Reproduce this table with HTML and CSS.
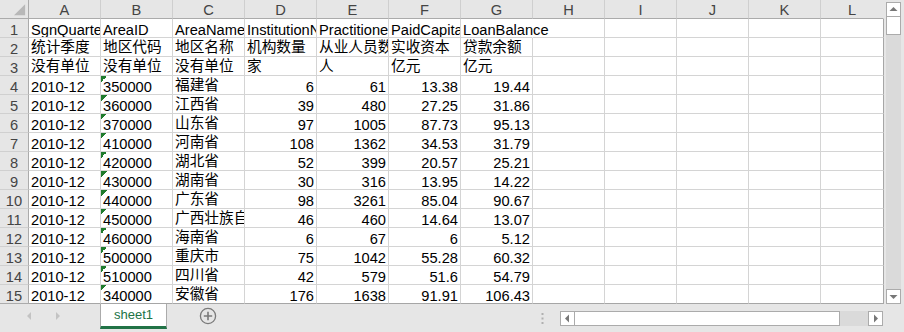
FILE: index.html
```html
<!DOCTYPE html>
<html lang="zh-CN">
<head>
<meta charset="utf-8">
<title>sheet1</title>
<link rel="stylesheet" href="styles.css">
</head>
<body>
<div class="app">
  <div class="top">
    <div class="sheet">
      <div class="corner"><svg width="29" height="18" viewBox="0 0 29 18"><polygon points="26,4 26,15.5 14.5,15.5" fill="#b8b8b8"/></svg></div>
      <div class="ch">A</div><div class="ch">B</div><div class="ch">C</div><div class="ch">D</div><div class="ch">E</div><div class="ch">F</div><div class="ch">G</div><div class="ch">H</div><div class="ch">I</div><div class="ch">J</div><div class="ch">K</div><div class="ch lc">L</div>

      <div class="rh">1</div><div class="c">SgnQuarter</div><div class="c">AreaID</div><div class="c">AreaName</div><div class="c">InstitutionNum</div><div class="c">Practitioners</div><div class="c">PaidCapital</div><div class="c spill">LoanBalance</div><div class="c"></div><div class="c"></div><div class="c"></div><div class="c"></div><div class="c lc"></div>

      <div class="rh">2</div><div class="c z">统计季度</div><div class="c z">地区代码</div><div class="c z">地区名称</div><div class="c z">机构数量</div><div class="c z">从业人员数</div><div class="c z">实收资本</div><div class="c z">贷款余额</div><div class="c"></div><div class="c"></div><div class="c"></div><div class="c"></div><div class="c lc"></div>

      <div class="rh">3</div><div class="c z">没有单位</div><div class="c z">没有单位</div><div class="c z">没有单位</div><div class="c z">家</div><div class="c z">人</div><div class="c z">亿元</div><div class="c z">亿元</div><div class="c"></div><div class="c"></div><div class="c"></div><div class="c"></div><div class="c lc"></div>

      <div class="rh">4</div><div class="c">2010-12</div><div class="c tri">350000</div><div class="c z">福建省</div><div class="c n">6</div><div class="c n">61</div><div class="c n">13.38</div><div class="c n">19.44</div><div class="c"></div><div class="c"></div><div class="c"></div><div class="c"></div><div class="c lc"></div>

      <div class="rh">5</div><div class="c">2010-12</div><div class="c tri">360000</div><div class="c z">江西省</div><div class="c n">39</div><div class="c n">480</div><div class="c n">27.25</div><div class="c n">31.86</div><div class="c"></div><div class="c"></div><div class="c"></div><div class="c"></div><div class="c lc"></div>

      <div class="rh">6</div><div class="c">2010-12</div><div class="c tri">370000</div><div class="c z">山东省</div><div class="c n">97</div><div class="c n">1005</div><div class="c n">87.73</div><div class="c n">95.13</div><div class="c"></div><div class="c"></div><div class="c"></div><div class="c"></div><div class="c lc"></div>

      <div class="rh">7</div><div class="c">2010-12</div><div class="c tri">410000</div><div class="c z">河南省</div><div class="c n">108</div><div class="c n">1362</div><div class="c n">34.53</div><div class="c n">31.79</div><div class="c"></div><div class="c"></div><div class="c"></div><div class="c"></div><div class="c lc"></div>

      <div class="rh">8</div><div class="c">2010-12</div><div class="c tri">420000</div><div class="c z">湖北省</div><div class="c n">52</div><div class="c n">399</div><div class="c n">20.57</div><div class="c n">25.21</div><div class="c"></div><div class="c"></div><div class="c"></div><div class="c"></div><div class="c lc"></div>

      <div class="rh">9</div><div class="c">2010-12</div><div class="c tri">430000</div><div class="c z">湖南省</div><div class="c n">30</div><div class="c n">316</div><div class="c n">13.95</div><div class="c n">14.22</div><div class="c"></div><div class="c"></div><div class="c"></div><div class="c"></div><div class="c lc"></div>

      <div class="rh">10</div><div class="c">2010-12</div><div class="c tri">440000</div><div class="c z">广东省</div><div class="c n">98</div><div class="c n">3261</div><div class="c n">85.04</div><div class="c n">90.67</div><div class="c"></div><div class="c"></div><div class="c"></div><div class="c"></div><div class="c lc"></div>

      <div class="rh">11</div><div class="c">2010-12</div><div class="c tri">450000</div><div class="c z">广西壮族自治区</div><div class="c n">46</div><div class="c n">460</div><div class="c n">14.64</div><div class="c n">13.07</div><div class="c"></div><div class="c"></div><div class="c"></div><div class="c"></div><div class="c lc"></div>

      <div class="rh">12</div><div class="c">2010-12</div><div class="c tri">460000</div><div class="c z">海南省</div><div class="c n">6</div><div class="c n">67</div><div class="c n">6</div><div class="c n">5.12</div><div class="c"></div><div class="c"></div><div class="c"></div><div class="c"></div><div class="c lc"></div>

      <div class="rh">13</div><div class="c">2010-12</div><div class="c tri">500000</div><div class="c z">重庆市</div><div class="c n">75</div><div class="c n">1042</div><div class="c n">55.28</div><div class="c n">60.32</div><div class="c"></div><div class="c"></div><div class="c"></div><div class="c"></div><div class="c lc"></div>

      <div class="rh">14</div><div class="c">2010-12</div><div class="c tri">510000</div><div class="c z">四川省</div><div class="c n">42</div><div class="c n">579</div><div class="c n">51.6</div><div class="c n">54.79</div><div class="c"></div><div class="c"></div><div class="c"></div><div class="c"></div><div class="c lc"></div>

      <div class="rh lr">15</div><div class="c lr">2010-12</div><div class="c tri lr">340000</div><div class="c z lr">安徽省</div><div class="c n lr">176</div><div class="c n lr">1638</div><div class="c n lr">91.91</div><div class="c n lr">106.43</div><div class="c lr"></div><div class="c lr"></div><div class="c lr"></div><div class="c lr"></div><div class="c lc lr"></div>
    </div>
    <div class="vscroll">
      <div class="sbtn"><svg width="13" height="13" viewBox="0 0 13 13"><polygon points="2.5,8 10.5,8 6.5,4" fill="#777"/></svg></div>
      <div class="vthumb"></div>
      <div class="vtrack"></div>
      <div class="sbtn"><svg width="13" height="13" viewBox="0 0 13 13"><polygon points="2.5,5 10.5,5 6.5,9" fill="#777"/></svg></div>
    </div>
  </div>
  <div class="tabbar">
    <div class="tabnav">
      <svg width="8" height="10" viewBox="0 0 8 10"><polygon points="6,1 6,9 2,5" fill="#c3c3c3"/></svg>
      <svg width="8" height="10" viewBox="0 0 8 10"><polygon points="2,1 2,9 6,5" fill="#c3c3c3"/></svg>
    </div>
    <div class="tab">sheet1</div>
    <div class="addsheet"><svg width="18" height="18" viewBox="0 0 18 18"><circle cx="9" cy="9" r="7.6" fill="none" stroke="#7a7a7a" stroke-width="1.3"/><path d="M9 4.8V13.2M4.8 9H13.2" stroke="#7a7a7a" stroke-width="1.6"/></svg></div>
    <div class="spacer"></div>
    <div class="grip"><svg width="3" height="11" viewBox="0 0 3 11"><rect x="0.5" y="0" width="2" height="2" fill="#b0b0b0"/><rect x="0.5" y="4.5" width="2" height="2" fill="#b0b0b0"/><rect x="0.5" y="9" width="2" height="2" fill="#b0b0b0"/></svg></div>
    <div class="hscroll">
      <div class="sbtn h"><svg width="13" height="13" viewBox="0 0 13 13"><polygon points="8,2.5 8,10.5 4,6.5" fill="#777"/></svg></div>
      <div class="hthumb"></div>
      <div class="htrack"></div>
      <div class="sbtn h"><svg width="13" height="13" viewBox="0 0 13 13"><polygon points="5,2.5 5,10.5 9,6.5" fill="#777"/></svg></div>
    </div>
  </div>
</div>
</body>
</html>
```
FILE: styles.css
```css
* { box-sizing: border-box; }

html, body {
  margin: 0;
  padding: 0;
}

body {
  width: 904px;
  height: 332px;
  overflow: hidden;
  background: #e6e6e6;
  font-family: "Liberation Sans", "Noto Sans CJK SC", sans-serif;
  font-size: 14.67px;
  color: #000;
}

.app {
  display: flex;
  flex-direction: column;
  width: 904px;
  height: 332px;
}

.top {
  display: flex;
  height: 304px;
}

.sheet {
  width: 884px;
  height: 304px;
  background: #fff;
  display: grid;
  grid-template-columns: 29px repeat(11, 72px) 63px;
  grid-template-rows: repeat(16, 19px);
  overflow: hidden;
}

.corner {
  background: #e6e6e6;
  border-right: 1px solid #ababab;
  border-bottom: 1px solid #ababab;
  display: flex;
}

.corner svg { display: block; }

.ch {
  background: #e6e6e6;
  border-right: 1px solid #cfcfcf;
  border-bottom: 1px solid #ababab;
  text-align: center;
  color: #444;
  line-height: 18px;
  padding-top: 1px;
  overflow: hidden;
  white-space: nowrap;
}

.ch.lc { border-right-color: #e6e6e6; }

.rh {
  background: #e6e6e6;
  border-right: 1px solid #ababab;
  border-bottom: 1px solid #d0d0d0;
  text-align: center;
  color: #444;
  line-height: 18px;
  padding-top: 2px;
  overflow: hidden;
  white-space: nowrap;
}

.c {
  border-right: 1px solid #d4d4d4;
  border-bottom: 1px solid #d4d4d4;
  padding: 2px 2px 0 2px;
  line-height: 18px;
  white-space: nowrap;
  overflow: hidden;
}

.c.z { padding-top: 0; }

.c.n { text-align: right; }

.c.spill {
  overflow: visible;
  border-right-color: transparent;
}

.c.tri {
  background: linear-gradient(135deg, #1e7b2c 0 50%, transparent 50%) no-repeat 0 0 / 6px 6px;
}

.c.lc { border-right-color: #a6a6a6; }
.lr { border-bottom-color: #a6a6a6 !important; }
.rh.lr { border-bottom-color: #ababab !important; }

.vscroll {
  width: 15px;
  margin-left: 2px;
  margin-top: 2px;
  display: flex;
  flex-direction: column;
  background: #dadada;
}

.sbtn {
  width: 15px;
  height: 15px;
  background: #fff;
  border: 1px solid #ababab;
  display: flex;
  align-items: center;
  justify-content: center;
  flex: none;
}

.sbtn svg { display: block; }

.vthumb {
  height: 18px;
  background: #fff;
  border: 1px solid #ababab;
  border-top: none;
  flex: none;
}

.vtrack { flex: 1; }

.tabbar {
  height: 28px;
  display: flex;
  align-items: flex-start;
}

.tabnav {
  width: 100px;
  height: 24px;
  display: flex;
  align-items: center;
  padding-left: 25px;
  gap: 21px;
}

.tabnav svg { display: block; }

.tab {
  width: 67px;
  height: 25px;
  background: #fff;
  border-left: 1px solid #ababab;
  border-right: 1px solid #ababab;
  border-bottom: 3px solid #217346;
  color: #217346;
  font-size: 13px;
  text-align: center;
  line-height: 20px;
  padding-top: 1px;
}

.addsheet {
  margin-left: 32px;
  margin-top: 3px;
  display: flex;
}

.addsheet svg { display: block; }

.spacer { flex: 1; }

.grip {
  margin-top: 9px;
  margin-right: 16px;
  display: flex;
}

.grip svg { display: block; }

.hscroll {
  width: 323px;
  height: 15px;
  margin-top: 7px;
  margin-right: 21px;
  display: flex;
  background: #dadada;
}

.hthumb {
  width: 265px;
  background: #fff;
  border-top: 1px solid #ababab;
  border-bottom: 1px solid #ababab;
  border-right: 1px solid #ababab;
  flex: none;
}

.htrack { flex: 1; }
```
